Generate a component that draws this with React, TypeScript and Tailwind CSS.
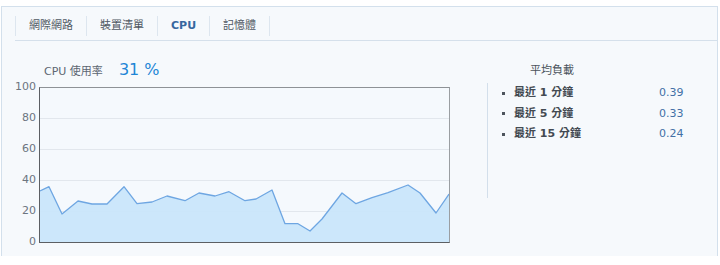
const FONT = "font-['DejaVu_Sans','Noto_Sans_CJK_TC',sans-serif]";

const tabs = [
  { label: "網際網路", active: false },
  { label: "裝置清單", active: false },
  { label: "CPU", active: true },
  { label: "記憶體", active: false },
];

// chart points in plot pixel coords (410 x 155)
const points: [number, number][] = [
  [0, 103], [9, 98.7], [22, 126], [38, 113], [52, 116], [67, 116], [84, 98.7],
  [97, 115.7], [112, 114], [127, 108], [145, 112.7], [159, 105], [175, 108],
  [189, 103.7], [205, 112.7], [216, 111], [232, 102], [245, 135.7], [258, 135.7],
  [270, 143], [282, 131], [302, 105], [316, 115.7], [332, 109.7], [348, 104.7],
  [368, 97], [380, 105], [396, 125], [409, 106],
];

const loads = [
  { label: "最近 1 分鐘", value: "0.39" },
  { label: "最近 5 分鐘", value: "0.33" },
  { label: "最近 15 分鐘", value: "0.24" },
];

function Chart() {
  const line = points.map(([x, y]) => `${x},${y}`).join(" ");
  const area = `0,155 ${line} 409,155`;
  return (
    <div className="relative w-[411px] h-[156px] border-l border-b border-l-[#5c5f63] border-b-[#5c5f63] border-t border-r border-t-[#8e9296] border-r-[#9a9ea2] bg-[#f5f9fd]">
      <svg width="409" height="154" viewBox="0 0 409 154" className="block">
        {[31, 62, 93, 124].map((y) => (
          <line key={y} x1="0" x2="409" y1={y - 0.5} y2={y - 0.5} stroke="#e2e7ed" strokeWidth="1" />
        ))}
        <polygon points={area} fill="#c9e6fb" fillOpacity="0.95" />
        <polyline points={line} fill="none" stroke="#6ea6e2" strokeWidth="1.3" strokeLinejoin="round" />
      </svg>
    </div>
  );
}

export default function App() {
  return (
    <div className={`${FONT} bg-white w-[720px] h-[265px] pt-[6px]`}>
      <div className="ml-px w-[717px] h-[250px] bg-[#f6f9fc] border-t border-l border-r border-[#d3e0ec]">
        <div className="ml-[13px] pt-[9px] pb-[4px] border-b border-[#d5e0eb] flex">
          {tabs.map((t) => (
            <div
              key={t.label}
              className={`h-[20px] flex items-center border-l border-[#dde6ef] px-[13px] text-[11px] ${
                t.active ? "font-bold text-[#36679f]" : "text-[#4f5863]"
              }`}
            >
              {t.label}
            </div>
          ))}
          <div className="h-[20px] border-l border-[#dde6ef]" />
        </div>

        <div className="flex">
          <div className="w-[470px]">
            <div className="mt-[21px] ml-[42px] flex items-baseline h-[18px]">
              <span className="text-[11px] text-[#5d6772]">CPU 使用率</span>
              <span className="ml-[16px] text-[16px] text-[#1e86d6] leading-none">31 %</span>
            </div>
            <div className="mt-[7px] flex items-start">
              <div className="w-[37px] h-[169px] -mt-[7px] pr-[3px] flex flex-col justify-between items-end text-[11px] leading-[14px] text-[#6c7580]">
                {["100", "80", "60", "40", "20", "0"].map((l) => (
                  <span key={l}>{l}</span>
                ))}
              </div>
              <Chart />
            </div>
          </div>

          <div className="flex-1">
            <div className="mt-[23px] ml-[58px] text-[11px] text-[#4a525b] leading-[14px]">平均負載</div>
            <div className="mt-[5px] ml-[15px] h-[115px] border-l border-[#d3dfeb]">
              {loads.map((l) => (
                <div key={l.label} className="h-[20.5px] flex items-center text-[11px]">
                  <span className="ml-[14px] w-[3px] h-[3px] bg-[#4d545c]" />
                  <span className="ml-[9px] w-[145px] font-bold text-[#434a52]">{l.label}</span>
                  <span className="text-[#4270a6]">{l.value}</span>
                </div>
              ))}
            </div>
          </div>
        </div>
      </div>
    </div>
  );
}
